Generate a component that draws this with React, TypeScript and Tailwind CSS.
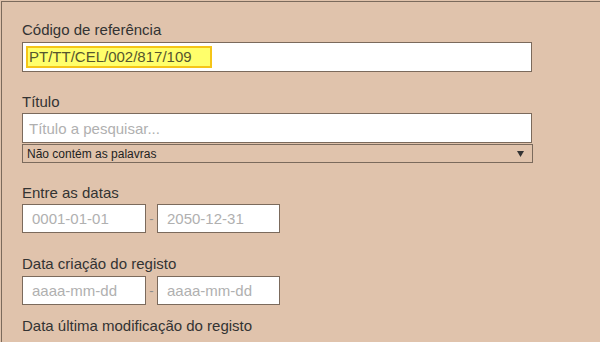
import React from "react";

const font = "font-['Liberation_Sans',Arial,sans-serif]";

function Label({ children, className = "" }: { children: React.ReactNode; className?: string }) {
  return <div className={`text-[15px] leading-[18px] text-[#333] ${className}`}>{children}</div>;
}

function DateRange({ from, to }: { from: string; to: string }) {
  return (
    <div className="flex items-center">
      <input
        readOnly
        placeholder={from}
        className="w-[124px] h-[29px] border border-[#7b6a5c] bg-white px-[9px] text-[15px] text-[#333] placeholder:text-[#b0b0b0] outline-none"
      />
      <span className="w-[11px] text-center text-[13px] text-[#8a8a8a]">-</span>
      <input
        readOnly
        placeholder={to}
        className="w-[123px] h-[29px] border border-[#7b6a5c] bg-white px-[9px] text-[15px] text-[#333] placeholder:text-[#b0b0b0] outline-none"
      />
    </div>
  );
}

export default function App() {
  return (
    <div className={`w-[600px] h-[342px] overflow-hidden bg-[#e0c3ac] pt-px pl-px ${font}`}>
      <div className="w-[680px] h-[400px] border-t border-l border-[#7b6a5c] pl-5 pt-[19px]">
        <Label>Código de referência</Label>
        <div className="mt-[3px] w-[510px] h-[30px] border border-[#7b6a5c] bg-white flex items-center pl-[3px]">
          <span className="w-[186px] h-[22px] border-2 border-[#f5c518] bg-[#ffff6b] text-[15px] leading-[18px] text-[#56562e] pl-px">
            PT/TT/CEL/002/817/109
          </span>
        </div>

        <Label className="mt-[21px]">Título</Label>
        <input
          readOnly
          placeholder="Título a pesquisar..."
          className="block mt-[2px] w-[510px] h-[30px] border border-[#7b6a5c] bg-white px-[6px] text-[15px] text-[#333] placeholder:text-[#b0b0b0] outline-none"
        />
        <div className="mt-[1px] w-[511px] h-[19px] border border-[#7b6a5c] flex items-center justify-between pl-[4px] pr-[8px]">
          <span className="text-[12px] leading-[14px] text-[#222]">Não contém as palavras</span>
          <svg width="7" height="6" viewBox="0 0 7 6" className="mt-px">
            <path d="M0 0 H7 L3.5 6 Z" fill="#333" />
          </svg>
        </div>

        <Label className="mt-[21px]">Entre as datas</Label>
        <div className="mt-[2px]">
          <DateRange from="0001-01-01" to="2050-12-31" />
        </div>

        <Label className="mt-[22px]">Data criação do registo</Label>
        <div className="mt-[3px]">
          <DateRange from="aaaa-mm-dd" to="aaaa-mm-dd" />
        </div>

        <Label className="mt-[12px]">Data última modificação do registo</Label>
      </div>
    </div>
  );
}
